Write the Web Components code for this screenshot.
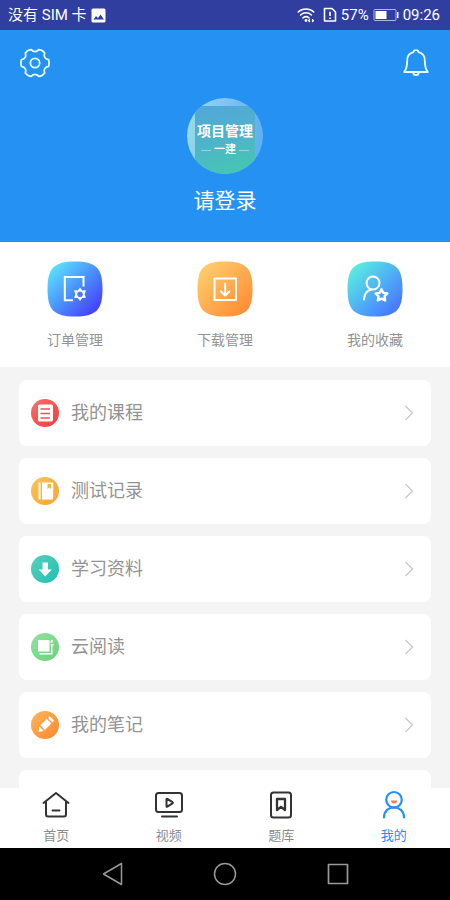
<!DOCTYPE html>
<html lang="zh-CN">
<head>
<meta charset="utf-8">
<meta name="viewport" content="width=device-width, initial-scale=1">
<title>我的</title>
<style>
  html, body { margin: 0; height: 100%; }
  body { font-family: Roboto, "Noto Sans CJK SC", sans-serif; background: #f4f4f4; }
</style>
</head>
<body>
<profile-app></profile-app>

<script>
const ICONS = {
  picture: `<svg width="15" height="15" viewBox="0 0 15 15"><path fill="#fff" fill-rule="evenodd" d="M2 0.5h11a1.5 1.5 0 0 1 1.5 1.5v11a1.5 1.5 0 0 1-1.500 1.500H2A1.500 1.500 0 0 1 .5 13V2A1.500 1.500 0 0 1 2 .5zM2.500 11.500h10.500L9.500 6.500 7 10 5 8z"/></svg>`,
  wifi: `<svg width="18" height="16" viewBox="0 0 18 16" fill="none" stroke="#fff" stroke-width="1.500" stroke-linecap="round"><path d="M1.200 5C5.500 1 12.500 1 16.800 5M3.500 8c3.200-2.900 7.800-2.900 11 0M6 10.900c1.800-1.500 4.200-1.500 6 0"/><circle cx="9" cy="13.500" r="1.400" fill="#fff" stroke="none"/><path d="M12.500 12.700l-.8.900.8.900M15.500 12.700l.8.900-.8.900" stroke-width="1.400"/></svg>`,
  sim: `<svg width="14" height="16" viewBox="0 0 14 16" fill="none" stroke="#fff" stroke-width="1.600" stroke-linejoin="round"><path d="M1.500 1.500h7.500l3.500 3.500v9h-11z"/><path d="M7 4.800v4.200M7 10.500v1.600" stroke-width="1.700"/></svg>`,
  battery: `<svg width="26" height="14" viewBox="0 0 26 14"><rect x="1" y="1.500" width="22" height="11" rx="1" fill="none" stroke="#aeb4e6"/><rect x="2.500" y="3" width="11" height="8" fill="#fff"/><rect x="24" y="4" width="1.500" height="6" fill="#fff"/></svg>`,
  gear: `<svg width="30" height="30" viewBox="-15.500 -15 31 30" fill="none" stroke="#e6ffff" stroke-width="1.800" stroke-linejoin="round"><path d="M14 3.500Q8.200 4.800 10 10.400Q7.500 13.800 4 13.800Q0 9.500-4 13.800Q-7.500 13.800-10 10.400Q-8.200 4.800-14 3.500Q-15 0-14-3.500Q-8.200-4.800-10-10.400Q-7.500-13.800-4-13.800Q0-9.500 4-13.800Q7.500-13.800 10-10.400Q8.200-4.800 14-3.500Q15 0 14 3.500Z"/><circle r="4.800"/></svg>`,
  bell: `<svg width="26" height="28" viewBox="0 0 26 28" fill="none" stroke="#e6ffff" stroke-width="1.800" stroke-linejoin="round" stroke-linecap="round"><path d="M10.500 3.200C10.500.3 15.500.3 15.500 3.200C19.800 4.200 21.800 7.200 21.800 11.500C21.800 17 22 19.500 24.800 23H1.200C4 19.500 4.200 17 4.200 11.500C4.200 7.200 6.200 4.200 10.500 3.200zM10.300 23.500a2.700 2.700 0 0 0 5.400 0"/></svg>`,
  order: `<svg width="56" height="56" viewBox="0 0 56 56"><defs><linearGradient id="g" x1=".12" y1=".12" x2=".85" y2=".85"><stop stop-color="#5bdcfc"/><stop offset=".55" stop-color="#4a8cfb"/><stop offset="1" stop-color="#4747fa"/></linearGradient></defs><path fill="url(#g)" d="M.5 28C.5 7 7 .5 28 .5S55.500 7 55.500 28 49 55.500 28 55.500.5 49 .5 28z"/><path d="M26 39.200h-8.200V16H36.500V25.500" fill="none" stroke="#fff" stroke-width="2"/><path d="M33 26.500l2.200 3 3.800-.2-1.400 3.900 1.400 3.600-3.800.1-2.200 3.200-2.200-3.200-3.800-.1 1.400-3.600-1.400-3.900 3.800.2zM33 30.400a2.800 2.800 0 1 0 0 5.600 2.800 2.800 0 0 0 0-5.600z" fill="#fff" fill-rule="evenodd"/></svg>`,
  download: `<svg width="56" height="56" viewBox="0 0 56 56"><defs><linearGradient id="g" x1=".12" y1=".12" x2=".85" y2=".85"><stop stop-color="#fecb6b"/><stop offset="1" stop-color="#ff9138"/></linearGradient></defs><path fill="url(#g)" d="M.5 28C.5 7 7 .5 28 .5S55.500 7 55.500 28 49 55.500 28 55.500.5 49 .5 28z"/><g fill="none" stroke="#fff" stroke-width="2" stroke-linejoin="round" stroke-linecap="round"><path d="M17.500 17.500h21.500v21.500h-21.500zM28.200 22.500v11.500M24 30.500l4.200 4 4.200-4"/></g></svg>`,
  favorite: `<svg width="56" height="56" viewBox="0 0 56 56"><defs><linearGradient id="g" x1=".12" y1=".12" x2=".85" y2=".85"><stop stop-color="#5aeae2"/><stop offset=".5" stop-color="#50b4f3"/><stop offset="1" stop-color="#477cff"/></linearGradient></defs><path fill="url(#g)" d="M.5 28C.5 7 7 .5 28 .5S55.500 7 55.500 28 49 55.500 28 55.500.5 49 .5 28z"/><g fill="none" stroke="#fff" stroke-width="2" stroke-linecap="round" stroke-linejoin="round"><circle cx="26" cy="22" r="6.500"/><path d="M17 38.500C17.200 33 20 29.500 24.500 28.500"/><path d="M34.500 28.200l1.900 3.700 4 .6-2.900 2.900.7 4.100-3.700-1.900-3.700 1.900.7-4.100-2.900-2.900 4-.6z" stroke-width="2.400"/></g></svg>`,
  course: `<svg width="28" height="28" viewBox="0 0 28 28"><rect x="7" y="5.500" width="15" height="17" rx="1.500" fill="#fff"/><path d="M9.500 10h9.500M9.500 14.500h9.500M9.500 19h9.500" stroke="#f4504f" stroke-width="1.500"/></svg>`,
  test: `<svg width="28" height="28" viewBox="0 0 28 28"><path fill="#fff" d="M7.500 5.500H9.500V22.500H7.500zM11 5.500H21a1.200 1.200 0 0 1 1.200 1.200V21.300A1.200 1.200 0 0 1 21 22.500H11z"/><path fill="#fab53e" d="M16.500 7h3.500v5l-1.700-1.500L16.500 12z"/></svg>`,
  material: `<svg width="28" height="28" viewBox="0 0 28 28"><path fill="#fff" d="M11.500 7.500h5.500v7h3.800L14.200 21.500 7.600 14.500h3.900z"/></svg>`,
  reading: `<svg width="28" height="28" viewBox="0 0 28 28"><rect x="7" y="7" width="11.500" height="11.500" fill="#fff"/><path fill="none" stroke="#fff" stroke-width="1.500" d="M8.500 20.800h12.300V12M19.500 9h1.500v-2M19.500 11.700h3"/></svg>`,
  notes: `<svg width="28" height="28" viewBox="0 0 28 28"><g transform="rotate(45 14 14)" fill="#fff"><rect x="11" y="4.500" width="6.500" height="2.500" rx="1"/><path d="M11 8.500h6.500v9h-6.500zM11 19h6.500l-3.200 4.500z"/></g></svg>`,
  chevron: `<svg width="10" height="16" viewBox="0 0 10 16" fill="none" stroke="#c8c8c8" stroke-width="1.300"><path d="M1.500 1L8.500 8l-7 7"/></svg>`,
  home: `<svg width="30" height="30" viewBox="0 0 30 30" fill="none" stroke="#333" stroke-width="2" stroke-linecap="round" stroke-linejoin="round"><path d="M2.500 13L15 3 27.500 13M5 12v12.500A2 2 0 0 0 7 26.500H23A2 2 0 0 0 25 24.500V12M11.500 20.500h7"/></svg>`,
  video: `<svg width="30" height="30" viewBox="0 0 30 30" fill="none" stroke="#333" stroke-width="2" stroke-linecap="round" stroke-linejoin="round"><rect x="2" y="3" width="26" height="19" rx="2.500"/><path d="M12.500 9.300v7q0 .8.8.4l5.200-3.300q.7-.6 0-1.200l-5.200-3.300q-.8-.4-.8.4zM8 26.500h15"/></svg>`,
  bank: `<svg width="30" height="30" viewBox="0 0 30 30" fill="none" stroke="#333" stroke-width="2" stroke-linejoin="round"><rect x="5" y="2.500" width="20" height="25" rx="2.500"/><path d="M11 9h8v11l-4-3.200-4 3.200z" stroke-width="2.300"/></svg>`,
  mine: `<svg width="30" height="30" viewBox="0 0 30 30" fill="none" stroke="#2591f2" stroke-width="2.200" stroke-linecap="round"><circle cx="15" cy="9.800" r="7.800"/><path d="M5 27.500C5 14 25 14 25 27.500"/><path d="M12 10.500h6a3 3 0 0 1-6 0z" fill="#ff7840" stroke="none"/></svg>`,
  back: `<svg width="24" height="24" viewBox="0 0 24 24" fill="none" stroke="#999" stroke-width="1.500" stroke-linejoin="round"><path d="M2.500 12L20.500 1.500v21z"/></svg>`,
  circle: `<svg width="24" height="24" viewBox="0 0 24 24" fill="none" stroke="#999" stroke-width="1.500"><circle cx="12" cy="12" r="10.500"/></svg>`,
  square: `<svg width="24" height="24" viewBox="0 0 24 24" fill="none" stroke="#999" stroke-width="1.700" stroke-linejoin="round"><rect x="2.500" y="2.500" width="19" height="19"/></svg>`
};

function define(name, markup) {
  customElements.define(name, class extends HTMLElement {
    constructor() {
      super();
      const template = document.createElement('template');
      template.innerHTML = markup;
      this.attachShadow({ mode: 'open' }).append(template.content.cloneNode(true));
    }
  });
}

customElements.define('app-icon', class extends HTMLElement {
  connectedCallback() {
    if (this.shadowRoot) return;
    this.attachShadow({ mode: 'open' }).innerHTML =
      `<style>:host{display:block;flex:none} svg{display:block}</style>${ICONS[this.getAttribute('name')] || ''}`;
    this.shadowRoot.querySelector('svg')?.setAttribute('aria-hidden', 'true');
  }
});

define('status-bar', `
  <style>
    :host { display: flex; align-items: center; justify-content: space-between; height: 30px; padding: 0 10px 0 8px;
      box-sizing: border-box; background: #303f9f; color: #fff; font-size: 15px; line-height: 20px; flex: none; }
    div { display: flex; align-items: center; gap: 4px; }
    .sim { margin-left: 4px; }
  </style>
  <div><span>没有 SIM 卡</span><app-icon name="picture"></app-icon></div>
  <div><app-icon name="wifi"></app-icon><app-icon class="sim" name="sim"></app-icon><span>57%</span><app-icon name="battery"></app-icon><span>09:26</span></div>
`);

define('course-avatar', `
  <style>
    :host { display: grid; grid-template: 8px 1fr / 8px 1fr; width: 76px; height: 76px; border-radius: 50%; overflow: hidden;
      background: linear-gradient(100deg, #97e0dc 0%, #86c8f4 35%, #58adf2 100%); color: #fff; }
    .cover { grid-area: 2 / 2; display: flex; flex-direction: column; align-items: center; margin-right: 8px; padding-top: 16px;
      background: linear-gradient(165deg, #52a7d9 0%, #4fb2cc 45%, #45c9ae 100%); }
    strong { font-size: 14px; line-height: 18px; font-weight: 700; white-space: nowrap; }
    .sub { display: flex; align-items: center; gap: 3px; font-size: 11px; line-height: 20px; font-weight: 500; white-space: nowrap; }
    i { width: 10px; height: 1px; background: #91d9dc; }
  </style>
  <div class="cover"><strong>项目管理</strong><span class="sub"><i></i>一建<i></i></span></div>
`);

define('profile-hero', `
  <style>
    :host { display: grid; grid-template-columns: 1fr auto 1fr; height: 212px; padding: 18px 20px 0; box-sizing: border-box;
      background: #2591f2; flex: none; }
    button { font: inherit; border: 0; padding: 0; background: none; color: #fff; cursor: pointer; align-self: start; }
    .bell { justify-self: end; padding: 1px 1px 0 0; }
    .gear { justify-self: start; }
    .login { display: flex; flex-direction: column; align-items: center; gap: 12px; padding-top: 50px; font-size: 21px; line-height: 30px; }
  </style>
  <button class="gear" aria-label="设置"><app-icon name="gear"></app-icon></button>
  <button class="login"><course-avatar></course-avatar><span>请登录</span></button>
  <button class="bell" aria-label="消息"><app-icon name="bell"></app-icon></button>
`);

define('shortcut-item', `
  <style>
    :host { display: flex; flex: 1; justify-content: center; }
    a { display: flex; flex-direction: column; align-items: center; gap: 13px; color: #939393; text-decoration: none; font-size: 14px; line-height: 20px; }
  </style>
  <a href="#"><slot name="icon"></slot><span><slot></slot></span></a>
`);

define('shortcut-bar', `
  <style>
    :host { display: flex; height: 125px; padding-top: 19px; box-sizing: border-box; background: #fff; flex: none; }
  </style>
  <slot></slot>
`);

define('menu-row', `
  <style>
    :host { display: block; flex: none; }
    a { display: flex; align-items: center; gap: 12px; height: 66px; padding: 0 17px 0 12px; box-sizing: border-box;
      border-radius: 8px; background: #fff; color: #939393; text-decoration: none; font-size: 18px; line-height: 26px; }
    .badge { width: 28px; height: 28px; border-radius: 50%; background: linear-gradient(135deg, var(--from), var(--to)); flex: none; }
    .label { flex: 1; }
  </style>
  <a href="#"><span class="badge"><slot name="icon"></slot></span><span class="label"><slot></slot></span><app-icon name="chevron"></app-icon></a>
`);

define('menu-list', `
  <style>
    :host { display: flex; flex-direction: column; gap: 12px; flex: 1; min-height: 0; overflow: hidden; padding: 13px 19px 0; box-sizing: border-box; background: #f4f4f4; }
    .next { height: 66px; flex: none; border-radius: 8px; background: #fff; }
  </style>
  <slot></slot><div class="next"></div>
`);

define('tab-item', `
  <style>
    :host { display: flex; flex: 1; justify-content: center; color: #8c8c8c; }
    :host([active]) { color: #2591f2; }
    a { display: flex; flex-direction: column; align-items: center; gap: 7px; color: inherit; text-decoration: none; font-size: 13px; line-height: 18px; }
  </style>
  <a href="#"><slot name="icon"></slot><span><slot></slot></span></a>
`);

define('tab-bar', `
  <style>
    :host { display: flex; height: 60px; padding-top: 2px; box-sizing: border-box; background: #fff; flex: none; }
  </style>
  <slot></slot>
`);

define('system-nav', `
  <style>
    :host { display: flex; justify-content: center; align-items: center; height: 52px; background: #000; flex: none; }
    button { display: flex; justify-content: center; flex: 0 0 25%; border: 0; padding: 0; background: none; cursor: pointer; }
  </style>
  <button aria-label="返回"><app-icon name="back"></app-icon></button>
  <button aria-label="主屏幕"><app-icon name="circle"></app-icon></button>
  <button aria-label="最近任务"><app-icon name="square"></app-icon></button>
`);

define('profile-app', `
  <style>
    :host { display: flex; flex-direction: column; height: 100vh; overflow: hidden; }
  </style>
  <status-bar></status-bar>
  <profile-hero></profile-hero>
  <shortcut-bar>
    <shortcut-item><app-icon slot="icon" name="order"></app-icon>订单管理</shortcut-item>
    <shortcut-item><app-icon slot="icon" name="download"></app-icon>下载管理</shortcut-item>
    <shortcut-item><app-icon slot="icon" name="favorite"></app-icon>我的收藏</shortcut-item>
  </shortcut-bar>
  <menu-list>
    <menu-row style="--from:#f7716b;--to:#f23a3e"><app-icon slot="icon" name="course"></app-icon>我的课程</menu-row>
    <menu-row style="--from:#f8c45e;--to:#fca42c"><app-icon slot="icon" name="test"></app-icon>测试记录</menu-row>
    <menu-row style="--from:#58d0bd;--to:#1fbfb4"><app-icon slot="icon" name="material"></app-icon>学习资料</menu-row>
    <menu-row style="--from:#94e3a1;--to:#67d27b"><app-icon slot="icon" name="reading"></app-icon>云阅读</menu-row>
    <menu-row style="--from:#fdb75c;--to:#fc872c"><app-icon slot="icon" name="notes"></app-icon>我的笔记</menu-row>
  </menu-list>
  <tab-bar>
    <tab-item><app-icon slot="icon" name="home"></app-icon>首页</tab-item>
    <tab-item><app-icon slot="icon" name="video"></app-icon>视频</tab-item>
    <tab-item><app-icon slot="icon" name="bank"></app-icon>题库</tab-item>
    <tab-item active><app-icon slot="icon" name="mine"></app-icon>我的</tab-item>
  </tab-bar>
  <system-nav></system-nav>
`);
</script>
</body>
</html>
